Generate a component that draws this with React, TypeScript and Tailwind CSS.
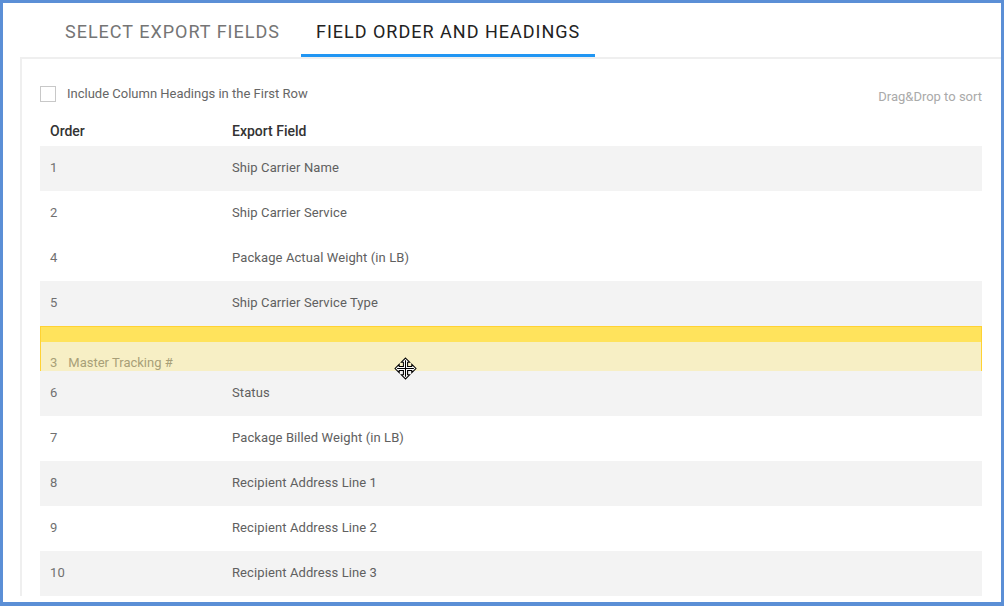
import React from 'react';

type Row = { order: string; field: string; shade: boolean };

const TOP_ROWS: Row[] = [
  { order: '1', field: 'Ship Carrier Name', shade: true },
  { order: '2', field: 'Ship Carrier Service', shade: false },
  { order: '4', field: 'Package Actual Weight (in LB)', shade: false },
  { order: '5', field: 'Ship Carrier Service Type', shade: true },
];

const BOTTOM_ROWS: Row[] = [
  { order: '6', field: 'Status', shade: true },
  { order: '7', field: 'Package Billed Weight (in LB)', shade: false },
  { order: '8', field: 'Recipient Address Line 1', shade: true },
  { order: '9', field: 'Recipient Address Line 2', shade: false },
  { order: '10', field: 'Recipient Address Line 3', shade: true },
];

function FieldRow({ row }: { row: Row }) {
  return (
    <div className={`flex items-center h-[45px] text-[13px] tracking-[0.1px] pb-[1px] ${row.shade ? 'bg-[#f3f3f3]' : 'bg-white'}`}>
      <div className="w-[182px] pl-[10px] text-[#707070]">{row.order}</div>
      <div className="pl-[10px] text-[#606060]">{row.field}</div>
    </div>
  );
}

function MoveCursor() {
  return (
    <svg width="23" height="23" viewBox="0 0 22 22" className="absolute left-[391px] top-[354px] pointer-events-none">
      <path
        d="M11 1 L15 5 L13 5 L13 9 L17 9 L17 7 L21 11 L17 15 L17 13 L13 13 L13 17 L15 17 L11 21 L7 17 L9 17 L9 13 L5 13 L5 15 L1 11 L5 7 L5 9 L9 9 L9 5 L7 5 Z"
        fill="#fff"
        stroke="#000"
        strokeWidth="1"
      />
      <path d="M11 3 L11 19 M3 11 L19 11" stroke="#000" strokeWidth="1" />
    </svg>
  );
}

export default function App() {
  return (
    <div
      className="relative w-[1004px] h-[606px] overflow-hidden bg-white border-[3px] border-b-4 border-[#5b8fd6]"
      style={{ fontFamily: 'Roboto, "Liberation Sans", sans-serif' }}
    >
      {/* Tabs */}
      <div className="flex h-[54px] pl-[46px]">
        <div className="flex items-center px-4 text-[18px] text-[#757575] tracking-[1px] pt-[2px]">SELECT EXPORT FIELDS</div>
        <div className="ml-[5px] flex items-center px-[15px] text-[18px] text-[#222] tracking-[1px] border-b-[3px] border-[#2196f3] pt-[5px]">
          FIELD ORDER AND HEADINGS
        </div>
      </div>

      {/* Panel */}
      <div className="ml-[17px] border-l-2 border-t-2 border-[#efefef] pl-[18px] pr-[19px] pt-[27px]">
        <div className="flex items-center justify-between h-4">
          <label className="flex items-center gap-[11px] text-[13px] text-[#666]">
            <span className="w-4 h-4 border border-[#c8c8c8] bg-white" />
            Include Column Headings in the First Row
          </label>
          <span className="text-[13px] text-[#aaa] pt-[6px]">Drag&amp;Drop to sort</span>
        </div>

        <div className="mt-[14px] flex items-center h-[30px] text-[14px] text-[#333] font-medium">
          <div className="w-[182px] pl-[10px]">Order</div>
          <div className="pl-[10px]">Export Field</div>
        </div>

        {TOP_ROWS.map(r => (
          <FieldRow key={r.order} row={r} />
        ))}

        {/* Drop placeholder with dragged item */}
        <div className="h-[45px] border border-b-0 border-[#ffd233]">
          <div className="h-[15px] bg-[#ffe35c]" />
          <div className="h-[29px] bg-[#f7efc5] flex items-center pt-[13px] text-[13px] text-[#a89f78]">
            <span className="pl-[9px]">3</span>
            <span className="pl-[11px]">Master Tracking #</span>
          </div>
        </div>

        {BOTTOM_ROWS.map(r => (
          <FieldRow key={r.order} row={r} />
        ))}
      </div>

      <MoveCursor />
    </div>
  );
}
